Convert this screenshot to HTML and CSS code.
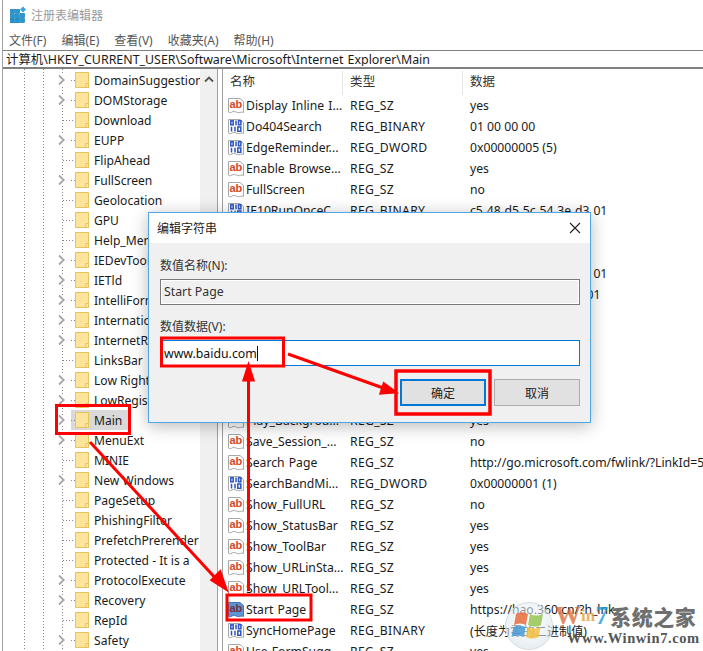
FILE: index.html
```html
<!DOCTYPE html>
<html lang="zh-CN">
<head>
<meta charset="utf-8">
<title>注册表编辑器</title>
<link rel="stylesheet" href="styles.css">
</head>
<body>
<svg class="defs" width="0" height="0">
  <defs>
    <symbol id="folder" viewBox="0 0 14 16">
      <path d="M.5.5H13.5V15.5H.5Z" fill="#fde49b" stroke="#e6c35c"/>
      <path d="M11 11.500H13.500V15.500H11Z" fill="#fbe9b0" stroke="#e6c35c"/>
    </symbol>
    <symbol id="chev" viewBox="0 0 7 10">
      <path d="M1 .5l4.700 4.500-4.700 4.500" fill="none" stroke="#a6a6a6" stroke-width="1.800"/>
    </symbol>
    <symbol id="ab" viewBox="0 0 16 16">
      <path d="M.5 .5H12l3.500 3V14.500c-2-1.500-3.500 1-6 0s-4-1.500-5.500-.5-3.500 1-3.500 0Z" fill="#fff" stroke="#a8a8a8"/>
      <text x="7.800" y="10" class="ab-text">ab</text>
    </symbol>
    <symbol id="bin" viewBox="0 0 16 16">
      <path d="M.5 .5H12l3.500 3V14.500c-2-1.500-3.500 1-6 0s-4-1.500-5.500-.5-3.500 1-3.500 0Z" fill="#fff" stroke="#a8a8a8"/>
      <g fill="none" stroke="#2a52c4" stroke-width="1.500">
        <rect x="2.800" y="1.800" width="2.400" height="4"/><path d="M8 1.500v4.800"/><rect x="10.500" y="1.800" width="2.400" height="4"/>
        <path d="M3.500 7.800v4.800M7 7.800v4.800"/><rect x="9.800" y="8" width="3" height="4.300"/>
      </g>
    </symbol>
    <symbol id="absel" viewBox="0 0 16 16">
      <path d="M.5 .5H12l3.500 3V14.500c-2-1.500-3.500 1-6 0s-4-1.500-5.500-.5-3.500 1-3.500 0Z" fill="#5b95d5" stroke="#3f78b5"/>
      <text x="7.800" y="10" class="ab-text ab-sel">ab</text>
    </symbol>
  </defs>
</svg>

<div class="window">
  <header class="titlebar">
    <svg class="appicon" width="17" height="17" viewBox="0 0 17 17">
      <g fill="#1e9bd7" stroke="#0c6ea6" stroke-width=".6">
        <rect x=".5" y="3.500" width="4" height="4"/><rect x="5.500" y="3.500" width="4" height="4"/><rect x="10.500" y="7.500" width="4" height="4"/>
        <rect x=".5" y="8.500" width="4" height="4"/><rect x="5.500" y="8.500" width="4" height="4"/>
        <rect x=".5" y="13" width="4" height="4"/><rect x="5.500" y="13" width="4" height="4"/><rect x="10.500" y="12.500" width="4" height="4"/>
      </g>
      <path d="M13 .5l3 3-3 3-3-3Z" fill="#38a5dd"/>
    </svg>
    <span>注册表编辑器</span>
  </header>
  <nav class="menubar">
    <span>文件(F)</span><span>编辑(E)</span><span>查看(V)</span><span>收藏夹(A)</span><span>帮助(H)</span>
  </nav>
  <div class="address"><div class="address-text">计算机\HKEY_CURRENT_USER\Software\Microsoft\Internet Explorer\Main</div></div>

  <main class="panes">
    <section class="tree-pane">
      <div class="tree">
        <div class="node exp"><svg class="chev"><use href="#chev"/></svg><i class="dots"></i><svg class="fld"><use href="#folder"/></svg><span class="lbl">DomainSuggestion</span></div>
        <div class="node exp"><svg class="chev"><use href="#chev"/></svg><i class="dots"></i><svg class="fld"><use href="#folder"/></svg><span class="lbl">DOMStorage</span></div>
        <div class="node leaf"><i class="dots"></i><svg class="fld"><use href="#folder"/></svg><span class="lbl">Download</span></div>
        <div class="node exp"><svg class="chev"><use href="#chev"/></svg><i class="dots"></i><svg class="fld"><use href="#folder"/></svg><span class="lbl">EUPP</span></div>
        <div class="node leaf"><i class="dots"></i><svg class="fld"><use href="#folder"/></svg><span class="lbl">FlipAhead</span></div>
        <div class="node exp"><svg class="chev"><use href="#chev"/></svg><i class="dots"></i><svg class="fld"><use href="#folder"/></svg><span class="lbl">FullScreen</span></div>
        <div class="node leaf"><i class="dots"></i><svg class="fld"><use href="#folder"/></svg><span class="lbl">Geolocation</span></div>
        <div class="node leaf"><i class="dots"></i><svg class="fld"><use href="#folder"/></svg><span class="lbl">GPU</span></div>
        <div class="node leaf"><i class="dots"></i><svg class="fld"><use href="#folder"/></svg><span class="lbl">Help_Menu_URLs</span></div>
        <div class="node exp"><svg class="chev"><use href="#chev"/></svg><i class="dots"></i><svg class="fld"><use href="#folder"/></svg><span class="lbl">IEDevTools</span></div>
        <div class="node exp"><svg class="chev"><use href="#chev"/></svg><i class="dots"></i><svg class="fld"><use href="#folder"/></svg><span class="lbl">IETld</span></div>
        <div class="node exp"><svg class="chev"><use href="#chev"/></svg><i class="dots"></i><svg class="fld"><use href="#folder"/></svg><span class="lbl">IntelliForms</span></div>
        <div class="node exp"><svg class="chev"><use href="#chev"/></svg><i class="dots"></i><svg class="fld"><use href="#folder"/></svg><span class="lbl">International</span></div>
        <div class="node exp"><svg class="chev"><use href="#chev"/></svg><i class="dots"></i><svg class="fld"><use href="#folder"/></svg><span class="lbl">InternetRegistry</span></div>
        <div class="node leaf"><i class="dots"></i><svg class="fld"><use href="#folder"/></svg><span class="lbl">LinksBar</span></div>
        <div class="node exp"><svg class="chev"><use href="#chev"/></svg><i class="dots"></i><svg class="fld"><use href="#folder"/></svg><span class="lbl">Low Rights</span></div>
        <div class="node exp"><svg class="chev"><use href="#chev"/></svg><i class="dots"></i><svg class="fld"><use href="#folder"/></svg><span class="lbl">LowRegistry</span></div>
        <div class="node exp sel"><svg class="chev"><use href="#chev"/></svg><i class="dots"></i><svg class="fld"><use href="#folder"/></svg><span class="lbl">Main</span></div>
        <div class="node exp"><svg class="chev"><use href="#chev"/></svg><i class="dots"></i><svg class="fld"><use href="#folder"/></svg><span class="lbl">MenuExt</span></div>
        <div class="node leaf"><i class="dots"></i><svg class="fld"><use href="#folder"/></svg><span class="lbl">MINIE</span></div>
        <div class="node exp"><svg class="chev"><use href="#chev"/></svg><i class="dots"></i><svg class="fld"><use href="#folder"/></svg><span class="lbl">New Windows</span></div>
        <div class="node leaf"><i class="dots"></i><svg class="fld"><use href="#folder"/></svg><span class="lbl">PageSetup</span></div>
        <div class="node leaf"><i class="dots"></i><svg class="fld"><use href="#folder"/></svg><span class="lbl">PhishingFilter</span></div>
        <div class="node leaf"><i class="dots"></i><svg class="fld"><use href="#folder"/></svg><span class="lbl">PrefetchPrerender</span></div>
        <div class="node leaf"><i class="dots"></i><svg class="fld"><use href="#folder"/></svg><span class="lbl">Protected - It is a</span></div>
        <div class="node exp"><svg class="chev"><use href="#chev"/></svg><i class="dots"></i><svg class="fld"><use href="#folder"/></svg><span class="lbl">ProtocolExecute</span></div>
        <div class="node exp"><svg class="chev"><use href="#chev"/></svg><i class="dots"></i><svg class="fld"><use href="#folder"/></svg><span class="lbl">Recovery</span></div>
        <div class="node leaf"><i class="dots"></i><svg class="fld"><use href="#folder"/></svg><span class="lbl">RepId</span></div>
        <div class="node exp"><svg class="chev"><use href="#chev"/></svg><i class="dots"></i><svg class="fld"><use href="#folder"/></svg><span class="lbl">Safety</span></div>
      </div>
      <div class="scrollbar"><svg width="10" height="7" viewBox="0 0 10 7"><path d="M1 5.500l4-4 4 4" fill="none" stroke="#555" stroke-width="1.800"/></svg></div>
    </section>

    <section class="list-pane">
      <div class="row head"><span>名称</span><span>类型</span><span>数据</span></div>
      <div class="row"><span class="name"><svg class="ico"><use href="#ab"/></svg><b>Display Inline I...</b></span><span>REG_SZ</span><span>yes</span></div>
      <div class="row"><span class="name"><svg class="ico"><use href="#bin"/></svg><b>Do404Search</b></span><span>REG_BINARY</span><span>01 00 00 00</span></div>
      <div class="row"><span class="name"><svg class="ico"><use href="#bin"/></svg><b>EdgeReminder...</b></span><span>REG_DWORD</span><span>0x00000005 (5)</span></div>
      <div class="row"><span class="name"><svg class="ico"><use href="#ab"/></svg><b>Enable Browse...</b></span><span>REG_SZ</span><span>yes</span></div>
      <div class="row"><span class="name"><svg class="ico"><use href="#ab"/></svg><b>FullScreen</b></span><span>REG_SZ</span><span>no</span></div>
      <div class="row"><span class="name"><svg class="ico"><use href="#bin"/></svg><b>IE10RunOnceC</b></span><span>REG_BINARY</span><span class="hex">c5 48 d5 5c 54 3e d3 01</span></div>
      <div class="row"><span class="name"><svg class="ico"><use href="#bin"/></svg><b>IE10RunOnceL</b></span><span>REG_BINARY</span><span>00 00 00 00</span></div>
      <div class="row"><span class="name"><svg class="ico"><use href="#ab"/></svg><b>IE10Tour</b></span><span>REG_SZ</span><span>yes</span></div>
      <div class="row"><span class="name"><svg class="ico"><use href="#bin"/></svg><b>IE11RunOnce</b></span><span>REG_BINARY</span><span class="hex">c5 48 d5 5c 54 3e d3 01</span></div>
      <div class="row"><span class="name"><svg class="ico"><use href="#bin"/></svg><b>IE11RunOnceL</b></span><span>REG_BINARY</span><span class="hex">c5 48 d5 5c 54 3e d 01</span></div>
      <div class="row"><span class="name"><svg class="ico"><use href="#ab"/></svg><b>IE11Tour</b></span><span>REG_SZ</span><span>yes</span></div>
      <div class="row"><span class="name"><svg class="ico"><use href="#ab"/></svg><b>Isolation</b></span><span>REG_SZ</span><span>no</span></div>
      <div class="row"><span class="name"><svg class="ico"><use href="#ab"/></svg><b>Isolation64Bit</b></span><span>REG_SZ</span><span>no</span></div>
      <div class="row"><span class="name"><svg class="ico"><use href="#ab"/></svg><b>Local Page</b></span><span>REG_SZ</span><span>yes</span></div>
      <div class="row"><span class="name"><svg class="ico"><use href="#ab"/></svg><b>NoUpdateCheck</b></span><span>REG_SZ</span><span>yes</span></div>
      <div class="row"><span class="name"><svg class="ico"><use href="#ab"/></svg><b>Play_Backgrou...</b></span><span>REG_SZ</span><span>yes</span></div>
      <div class="row"><span class="name"><svg class="ico"><use href="#ab"/></svg><b>Save_Session_...</b></span><span>REG_SZ</span><span>no</span></div>
      <div class="row"><span class="name"><svg class="ico"><use href="#ab"/></svg><b>Search Page</b></span><span>REG_SZ</span><span>http://go.microsoft.com/fwlink/?LinkId=54896</span></div>
      <div class="row"><span class="name"><svg class="ico"><use href="#bin"/></svg><b>SearchBandMi...</b></span><span>REG_DWORD</span><span>0x00000001 (1)</span></div>
      <div class="row"><span class="name"><svg class="ico"><use href="#ab"/></svg><b>Show_FullURL</b></span><span>REG_SZ</span><span>no</span></div>
      <div class="row"><span class="name"><svg class="ico"><use href="#ab"/></svg><b>Show_StatusBar</b></span><span>REG_SZ</span><span>yes</span></div>
      <div class="row"><span class="name"><svg class="ico"><use href="#ab"/></svg><b>Show_ToolBar</b></span><span>REG_SZ</span><span>yes</span></div>
      <div class="row"><span class="name"><svg class="ico"><use href="#ab"/></svg><b>Show_URLinSta...</b></span><span>REG_SZ</span><span>yes</span></div>
      <div class="row"><span class="name"><svg class="ico"><use href="#ab"/></svg><b>Show_URLTool...</b></span><span>REG_SZ</span><span>yes</span></div>
      <div class="row"><span class="name"><svg class="ico"><use href="#absel"/></svg><b>Start Page</b></span><span>REG_SZ</span><span>https://hao.360.cn/?h_lnk</span></div>
      <div class="row"><span class="name"><svg class="ico"><use href="#bin"/></svg><b>SyncHomePage</b></span><span>REG_BINARY</span><span>(长度为零的二进制值)</span></div>
      <div class="row"><span class="name"><svg class="ico"><use href="#ab"/></svg><b>Use FormSugg...</b></span><span>REG_SZ</span><span>yes</span></div>
    </section>
  </main>
</div>

<div class="dialog">
  <div class="dlg-title"><span>编辑字符串</span>
    <svg width="12" height="12" viewBox="0 0 12 12"><path d="M1 1l10 10M11 1L1 11" stroke="#222" stroke-width="1.100" fill="none"/></svg>
  </div>
  <div class="dlg-body">
    <label>数值名称(N):</label>
    <div class="field ro">Start Page</div>
    <label class="second">数值数据(V):</label>
    <div class="field active">www.baidu.com<i class="caret"></i></div>
    <div class="buttons">
      <button class="btn primary">确定</button>
      <button class="btn">取消</button>
    </div>
  </div>
</div>

<svg class="overlay" width="703" height="651" viewBox="0 0 703 651">
  <g fill="none" stroke="#ff0000" stroke-width="3">
    <rect x="56.500" y="405.500" width="73" height="28"/>
    <rect x="227" y="595" width="84" height="25"/>
    <rect x="161.500" y="338" width="122" height="28"/>
    <rect x="396" y="371" width="94" height="43" stroke-width="3.500"/>
  </g>
  <g stroke="#ff0000" stroke-width="3" fill="#ff0000">
    <path d="M90 442L219 582" fill="none"/>
    <path d="M226 589L212 580L220 572Z"/>
    <path d="M248.500 591V372" fill="none"/>
    <path d="M248.500 366L253 380H244Z"/>
    <path d="M288 354L386 389" fill="none"/>
    <path d="M395 392L381 393L384 384Z"/>
  </g>
</svg>

<div class="watermark">
  <svg class="orb" width="48" height="48" viewBox="0 0 48 48">
    <defs>
      <radialGradient id="orbfill" cx=".5" cy=".4" r=".6"><stop offset="0" stop-color="#fff" stop-opacity=".55"/><stop offset="1" stop-color="#d5e2ea" stop-opacity=".6"/></radialGradient>
    </defs>
    <circle cx="24" cy="24" r="23.500" fill="url(#orbfill)" stroke="#d5dde2"/>
    <path d="M11 12c4-2 7-2 12 0l-2 11c-4-2-8-2-12 0Z" fill="#e8632f" opacity=".8"/>
    <path d="M25 12c4 2 8 2 13 0l-2 11c-4 2-8 2-13 0Z" fill="#8fc046" opacity=".8"/>
    <path d="M8.500 25c4-2 8-2 12 0l-2 10c-4-2-8-2-12 0Z" fill="#3f97d6" opacity=".8"/>
    <path d="M23 25c4 2 8 2 12.500 0l-2 10c-4 2-8 2-12.500 0Z" fill="#f4bb34" opacity=".8"/>
  </svg>
  <div class="wm-text">
    <div class="wm-top"><span class="wm-w">W</span><span class="wm-in">in</span><span class="wm-7">7</span><span class="wm-cn">系统之家</span></div>
    <div class="wm-url">Www.Winwin7.com</div>
  </div>
</div>
</body>
</html>
```
FILE: styles.css
```css
* { box-sizing: border-box; }
html, body { margin: 0; padding: 0; height: 651px; overflow: hidden; background: #fff; }
body { position: relative; width: 703px; font-family: "Noto Sans", "Noto Sans CJK SC", sans-serif; font-size: 13px; color: #1a1a1a; }
.defs { position: absolute; }
.window { height: 651px; margin-left: 2px; border-left: 1px solid #a0a0a0; display: flex; flex-direction: column; overflow: hidden; }

.titlebar { height: 30px; display: flex; align-items: center; gap: 4px; padding: 0 0 1px 7px; color: #9a9a9a; font-size: 12px; flex: none; }
.appicon { flex: none; }
.menubar { height: 20px; display: flex; gap: 15px; padding-left: 6px; align-items: center; color: #555; font-size: 12px; flex: none; }
.address { height: 19px; flex: none; border-top: 1px solid #808080; border-bottom: 2px solid #808080; padding-left: 3px; }
.address-text { height: 15px; overflow: hidden; font-size: 12.400px; line-height: 17px; white-space: nowrap; word-spacing: 1px; }

.panes { flex: 1; display: flex; min-height: 0; }
.tree-pane { width: 215px; flex: none; display: flex; border-right: 1px solid #a0a0a0; }
.tree { width: 197px; flex: none; padding-top: 1px; overflow: hidden; background-image:
  repeating-linear-gradient(#888 0 1px, transparent 1px 3px),
  repeating-linear-gradient(#888 0 1px, transparent 1px 3px),
  repeating-linear-gradient(#888 0 1px, transparent 1px 3px);
  background-size: 1px 100%, 1px 100%, 1px 100%;
  background-position: 21px 0, 40px 0, 59px 0;
  background-repeat: no-repeat; }
.scrollbar { flex: 1; background: #f0f0f0; display: flex; justify-content: center; padding-top: 7px; }
.scrollbar svg { display: block; }
.node { height: 20px; display: flex; align-items: center; white-space: nowrap; position: relative; }
.chev { width: 7px; height: 10px; margin-left: 55px; flex: none; background: #fff; }
.dots { width: 4px; height: 1px; margin-left: 6px; flex: none; background-image: repeating-linear-gradient(90deg, #888 0 1px, transparent 1px 3px); }
.leaf .dots { width: 12px; margin-left: 60px; }
.fld { width: 14px; height: 16px; flex: none; }
.lbl { margin-left: 5px; font-size: 12.100px; }
.sel::before { content: ""; position: absolute; left: 68px; width: 57px; height: 20px; top: 0; background: #d9d9d9; }
.sel > * { position: relative; }

.list-pane { flex: 1; min-width: 0; margin-left: 4px; border-left: 1px solid #a0a0a0; overflow: hidden; padding-top: 1px; }
.row { display: grid; grid-template-columns: 122px 120px 1fr; height: 21px; align-items: center; white-space: nowrap; font-size: 12.200px; padding-left: 5px; }
.row > span:nth-child(2) { letter-spacing: .3px; }
.hex { word-spacing: .7px; }
.head { height: 25px; grid-template-columns: 120px 120px 1fr; color: #333; padding-left: 0; font-size: 12.500px; }
.head > span { padding-left: 7px; height: 24px; line-height: 22px; border-right: 1px solid #e5e5e5; }
.head > span:last-child { border-right: 0; }
.name { display: flex; align-items: center; gap: 2px; overflow: hidden; }
.name b { font-weight: 400; word-spacing: 1px; }
.ico { width: 16px; height: 16px; flex: none; }
.ab-text { font: 700 11px "Liberation Sans", sans-serif; fill: #d4472a; text-anchor: middle; }
.ab-sel { fill: #7a2e3e; }

.dialog { position: absolute; left: 148px; top: 212px; width: 443px; height: 211px; background: #f0f0f0; border: 1px solid #4ea6e6; box-shadow: 0 3px 16px rgba(0,0,0,.28); display: flex; flex-direction: column; }
.dlg-title { height: 30px; background: #fff; display: flex; justify-content: space-between; align-items: center; padding: 0 9px 0 8px; font-size: 12px; color: #222; flex: none; }
.dlg-body { padding: 14px 10px 0 11px; display: flex; flex-direction: column; font-size: 12px; color: #333; flex: 1; }
.dlg-body label { height: 18px; line-height: 18px; }
.field { height: 26px; margin-top: 4px; border: 1px solid #7a7a7a; padding-left: 3px; line-height: 23px; font-size: 12.300px; }
.ro { background: #f0f0f0; box-shadow: inset 0 0 0 1px #fff; }
.second { margin-top: 13px; }
.active { background: #fff; border-color: #0078d7; color: #111; display: flex; align-items: center; }
.caret { display: inline-block; width: 1px; height: 15px; background: #111; }
.buttons { display: flex; justify-content: flex-end; gap: 8px; margin-top: 13px; }
.btn { width: 86px; height: 27px; background: #e1e1e1; border: 1px solid #adadad; font: 12px "Noto Sans", "Noto Sans CJK SC", sans-serif; color: #222; padding: 0; }
.primary { border: 2px solid #0078d7; }

.overlay { position: absolute; left: 0; top: 0; pointer-events: none; }

.watermark { position: absolute; left: 505px; top: 602px; width: 198px; height: 49px; }
.orb { position: absolute; left: 0; top: 0; }
.wm-text { position: absolute; left: 50px; top: 1px; white-space: nowrap; }
.wm-top { display: flex; align-items: center; height: 26px; font-family: "Liberation Serif", serif; font-weight: 700; }
.wm-w { font-size: 26px; color: #d9682e; opacity: .75; }
.wm-in { font-size: 17px; color: #e5a13b; opacity: .8; }
.wm-7 { font-size: 26px; color: #1f9fd8; opacity: .8; margin-right: 2px; }
.wm-cn { font: 800 21px "Noto Sans CJK SC", sans-serif; color: #6f6f6f; letter-spacing: .5px; }
.wm-url { font: 700 14.500px "Liberation Serif", serif; color: #555; margin: 1px 0 0 12px; letter-spacing: .6px; }
```
